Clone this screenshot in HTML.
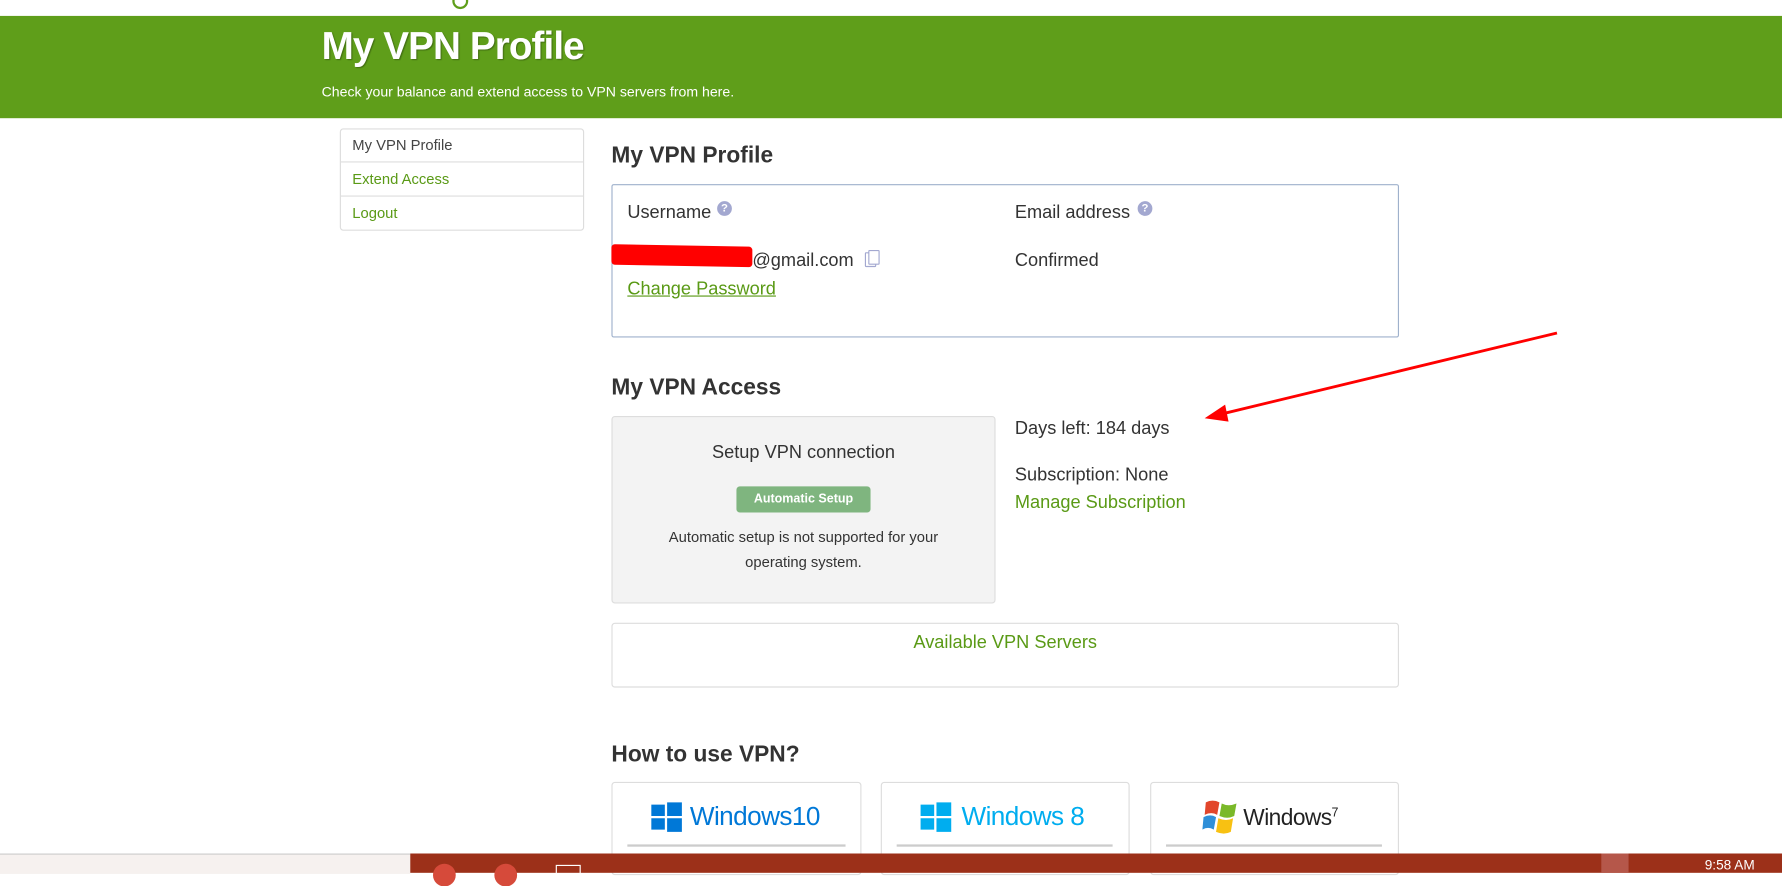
<!DOCTYPE html>
<html><head><meta charset="utf-8"><style>
html,body{margin:0;padding:0;width:1782px;height:873px;overflow:hidden;background:#fff;font-family:"Liberation Sans",sans-serif;color:#333}
#w{position:absolute;left:0;top:0;width:1568px;height:768px;transform:scale(1.13648);transform-origin:0 0}
.a{position:absolute;white-space:nowrap}
.g{color:#5a9a16}
</style></head><body><div id="w">
<div class="a" style="left:398px;top:-6px;width:10px;height:10px;border:2px solid #5f9e1a;border-radius:50%"></div>
<div class="a" style="left:0;top:14px;width:1568px;height:90px;background:#5f9e1a"></div>
<div class="a" style="left:283px;top:22px;font-size:34px;font-weight:bold;color:#fff;letter-spacing:-0.8px;text-shadow:1px 1px 1px rgba(0,0,0,.3)">My VPN Profile</div>
<div class="a" style="left:283px;top:74px;font-size:12.4px;color:#fff">Check your balance and extend access to VPN servers from here.</div>

<div class="a" style="left:299px;top:113px;width:213px;height:88px;border:1px solid #ddd;border-radius:3px"></div>
<div class="a" style="left:300px;top:142px;width:213px;border-top:1px solid #ddd"></div>
<div class="a" style="left:300px;top:172px;width:213px;border-top:1px solid #ddd"></div>
<div class="a" style="left:310px;top:120px;font-size:13px;color:#444">My VPN Profile</div>
<div class="a g" style="left:310px;top:150px;font-size:13px">Extend Access</div>
<div class="a g" style="left:310px;top:180px;font-size:13px">Logout</div>

<div class="a" style="left:538px;top:126px;font-size:20px;font-weight:bold">My VPN Profile</div>
<div class="a" style="left:538px;top:162px;width:691px;height:133px;border:1px solid #9fb1cc;border-radius:2px"></div>
<div class="a" style="left:552px;top:179px;font-size:16px">Username</div>
<div class="a" style="left:631px;top:177px;width:13px;height:13px;border-radius:50%;background:#a3a8d0;color:#fff;font-size:10px;font-weight:bold;text-align:center;line-height:13px">?</div>
<div class="a" style="left:893px;top:179px;font-size:16px">Email address</div>
<div class="a" style="left:1001px;top:177px;width:13px;height:13px;border-radius:50%;background:#a3a8d0;color:#fff;font-size:10px;font-weight:bold;text-align:center;line-height:13px">?</div>
<div class="a" style="left:538px;top:216px;width:124px;height:18px;background:#f00;border-radius:3px;transform:skewY(1deg)"></div>
<div class="a" style="left:662px;top:221px;font-size:16px">@gmail.com</div>
<div class="a" style="left:761px;top:222px;width:8px;height:11px;border:1.5px solid #a3a8d0;border-radius:1px"></div>
<div class="a" style="left:764px;top:220px;width:8px;height:11px;border:1.5px solid #a3a8d0;border-radius:1px;background:#fff"></div>
<div class="a g" style="left:552px;top:246px;font-size:16px;text-decoration:underline">Change Password</div>
<div class="a" style="left:893px;top:221px;font-size:16px">Confirmed</div>

<div class="a" style="left:538px;top:330px;font-size:20px;font-weight:bold">My VPN Access</div>
<div class="a" style="left:538px;top:366px;width:336px;height:163px;background:#f3f3f3;border:1px solid #ddd;border-radius:3px"></div>
<div class="a" style="left:538px;top:390px;width:338px;text-align:center;font-size:16px">Setup VPN connection</div>
<div class="a" style="left:648px;top:428px;width:118px;height:23px;background:#7fb57f;border-radius:3px;color:#fff;font-size:11px;font-weight:bold;text-align:center;line-height:22px">Automatic Setup</div>
<div class="a" style="left:538px;top:462px;width:338px;text-align:center;font-size:13px;line-height:22px;white-space:normal">Automatic setup is not supported for your<br>operating system.</div>
<div class="a" style="left:893px;top:369px;font-size:16px">Days left: 184 days</div>
<div class="a" style="left:893px;top:410px;font-size:16px">Subscription: None</div>
<div class="a g" style="left:893px;top:434px;font-size:16px">Manage Subscription</div>
<svg class="a" style="left:0;top:0" width="1568" height="768"><line x1="1370" y1="293" x2="1072" y2="365" stroke="#f00" stroke-width="2.5"/><polygon points="1060,368 1078,356 1081,371" fill="#f00"/></svg>

<div class="a" style="left:538px;top:548px;width:691px;height:55px;border:1px solid #ddd;border-radius:3px"></div>
<div class="a g" style="left:538px;top:557px;width:693px;text-align:center;font-size:16px">Available VPN Servers</div>

<div class="a" style="left:538px;top:653px;font-size:20px;font-weight:bold">How to use VPN?</div>
<div class="a" style="left:538px;top:688px;width:218px;height:80px;border:1px solid #ddd;border-radius:3px"></div>
<div class="a" style="left:775px;top:688px;width:217px;height:80px;border:1px solid #ddd;border-radius:3px"></div>
<div class="a" style="left:1012px;top:688px;width:217px;height:80px;border:1px solid #ddd;border-radius:3px"></div>
<div class="a" style="left:552px;top:743px;width:192px;border-top:2px solid #ccc"></div>
<div class="a" style="left:789px;top:743px;width:190px;border-top:2px solid #ccc"></div>
<div class="a" style="left:1026px;top:743px;width:190px;border-top:2px solid #ccc"></div>
<svg class="a" style="left:573px;top:705px" width="28" height="28"><path d="M0 3H12V13H0ZM14 1H27V13H14ZM0 15H12V25H0ZM14 15H27V27H14Z" fill="#0078d7"/></svg>
<div class="a" style="left:607px;top:705px;font-size:23px;color:#0078d7;letter-spacing:-0.5px">Windows10</div>
<svg class="a" style="left:810px;top:705px" width="28" height="28"><path d="M0 3H12V13H0ZM14 1H27V13H14ZM0 15H12V25H0ZM14 15H27V27H14Z" fill="#00adef"/></svg>
<div class="a" style="left:846px;top:705px;font-size:23px;color:#00adef;letter-spacing:-0.5px">Windows 8</div>
<svg class="a" style="left:1058px;top:702px" width="34" height="34"><path d="M3 4Q9 1 15 4L13 15Q8 12 2 15Z" fill="#e2462b"/><path d="M17 5Q23 8 30 5L28 16Q22 19 15 16Z" fill="#7ab929"/><path d="M1 17Q7 14 12 17L10 28Q5 25 0 28Z" fill="#2f8fd8"/><path d="M14 18Q21 21 27 18L25 30Q19 33 12 30Z" fill="#f8c112"/></svg>
<div class="a" style="left:1094px;top:709px;font-size:20px;color:#222;letter-spacing:-0.5px">Windows<sup style="font-size:11px">7</sup></div>

<div class="a" style="left:0;top:751px;width:361px;height:17px;background:#f6f1ef;border-top:1px solid #ccc"></div>
<div class="a" style="left:361px;top:751px;width:1207px;height:17px;background:#9c3019"></div>
<div class="a" style="left:381px;top:760px;width:20px;height:20px;border-radius:50%;background:#d64a3a"></div>
<div class="a" style="left:435px;top:760px;width:20px;height:20px;border-radius:50%;background:#d64a3a"></div>
<div class="a" style="left:489px;top:761px;width:20px;height:14px;border:1.5px solid #fff"></div>
<div class="a" style="left:1409px;top:751px;width:24px;height:17px;background:#b5574a"></div>
<div class="a" style="left:1500px;top:754px;font-size:12px;color:#fff">9:58 AM</div>
</div></body></html>
